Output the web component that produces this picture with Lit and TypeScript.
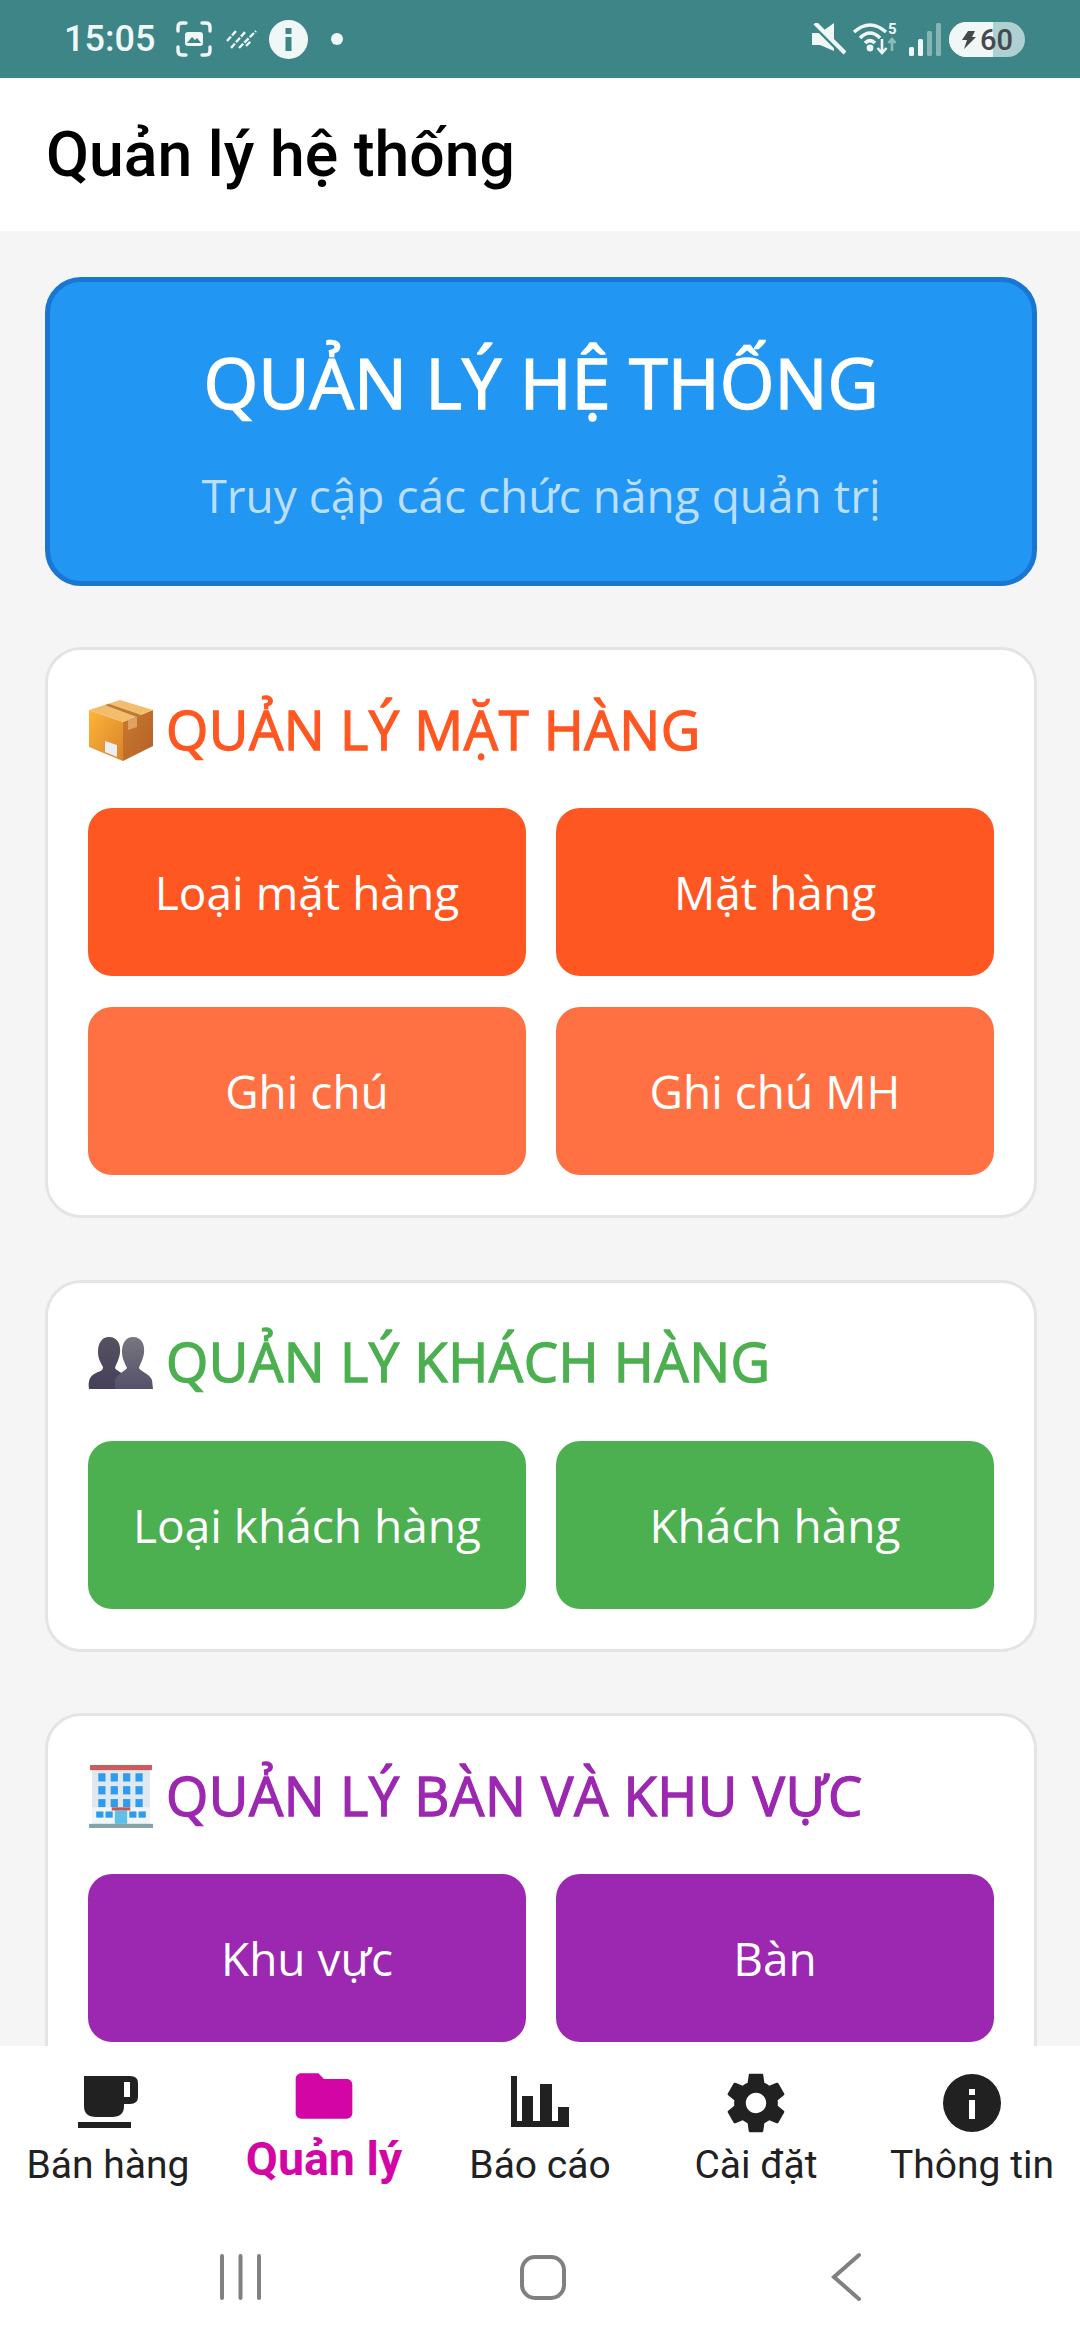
import { css, html, LitElement, svg, TemplateResult } from "lit";
import { customElement } from "lit/decorators.js";

const boxEmoji = html`<svg class="emoji" viewBox="0 0 66 64">
  <defs>
    <linearGradient id="boxL" x1="0" y1="0" x2="1" y2="1">
      <stop offset="0" stop-color="#ffb638" />
      <stop offset="1" stop-color="#d9822b" />
    </linearGradient>
    <linearGradient id="boxR" x1="0" y1="0" x2="1" y2="1">
      <stop offset="0" stop-color="#c97a2c" />
      <stop offset="1" stop-color="#b5602a" />
    </linearGradient>
  </defs>
  <path d="M1 11 L35 23 L35 62 L1 48 Z" fill="url(#boxL)" />
  <path d="M35 23 L65 11 L65 47 L35 62 Z" fill="url(#boxR)" />
  <path d="M1 11 L32 1 L65 11 L35 23 Z" fill="#f3bd6e" />
  <path d="M17 6 L21 5 L53 16 L49 18 Z" fill="#b97a3a" />
  <path d="M40 21 L49 18 L49 28 L40 31 Z" fill="#e0a060" />
  <path d="M17 42 L29 46 L29 58 L17 53 Z" fill="#eceef4" />
</svg>`;

const peopleEmoji = html`<svg class="emoji" viewBox="0 0 66 56">
  <defs>
    <linearGradient id="backP" x1="0" y1="0" x2="0" y2="1">
      <stop offset="0" stop-color="#55525f" />
      <stop offset="1" stop-color="#46405a" />
    </linearGradient>
    <linearGradient id="frontP" x1="0" y1="0" x2="0" y2="1">
      <stop offset="0" stop-color="#78767f" />
      <stop offset="1" stop-color="#55506a" />
    </linearGradient>
  </defs>
  <path
    d="M21 2 C30 2 33 10 32 18 C31 25 28 29 27 33 C29 37 38 38 40 46 L40 54 L1 54 C0 47 1 41 8 38 C12 36 15 36 15 32 C13 28 10 24 10 17 C10 8 14 2 21 2 Z"
    fill="url(#backP)"
  />
  <path
    d="M45 2 C54 2 57 10 56 18 C55 25 52 29 51 33 C53 37 61 38 64 45 L65 54 L27 54 L27 45 C30 38 36 37 39 33 C37 28 34 24 34 17 C34 8 38 2 45 2 Z"
    fill="url(#frontP)"
  />
</svg>`;

const hotelWindows = [0, 1, 2, 3].flatMap((c) =>
  [0, 1, 2].map(
    (r) =>
      svg`<rect x=${9 + c * 12} y=${8 + r * 12.5} width="7" height="8" fill="#2e9bef" />`
  )
);

const hotelEmoji = html`<svg class="emoji" viewBox="0 0 62 62">
  <rect x="3" y="4" width="56" height="54" fill="#dfe8ef" />
  <rect x="1" y="0" width="60" height="5" fill="#cf5a5c" />
  ${hotelWindows}
  <rect x="3" y="41" width="56" height="16" fill="#f1f5f8" />
  <rect x="7" y="45" width="7" height="6" fill="#2e9bef" />
  <rect x="16" y="45" width="7" height="6" fill="#2e9bef" />
  <rect x="39" y="45" width="7" height="6" fill="#2e9bef" />
  <rect x="48" y="45" width="7" height="6" fill="#2e9bef" />
  <rect x="25" y="44" width="12" height="13" fill="#5cc0e8" />
  <rect x="22" y="41" width="18" height="3" fill="#c9544f" />
  <rect x="0" y="57" width="62" height="4" fill="#84a3a8" />
</svg>`;

interface Section {
  emoji: TemplateResult;
  title: string;
  color: string;
  buttons: { label: string; color: string }[];
}

const sections: Section[] = [
  {
    emoji: boxEmoji,
    title: "QUẢN LÝ MẶT HÀNG",
    color: "#ff5722",
    buttons: [
      { label: "Loại mặt hàng", color: "#ff5722" },
      { label: "Mặt hàng", color: "#ff5722" },
      { label: "Ghi chú", color: "#ff7043" },
      { label: "Ghi chú MH", color: "#ff7043" },
    ],
  },
  {
    emoji: peopleEmoji,
    title: "QUẢN LÝ KHÁCH HÀNG",
    color: "#4caf50",
    buttons: [
      { label: "Loại khách hàng", color: "#4caf50" },
      { label: "Khách hàng", color: "#4caf50" },
    ],
  },
  {
    emoji: hotelEmoji,
    title: "QUẢN LÝ BÀN VÀ KHU VỰC",
    color: "#9c27b0",
    buttons: [
      { label: "Khu vực", color: "#9c27b0" },
      { label: "Bàn", color: "#9c27b0" },
    ],
  },
];

const tabs = [
  {
    label: "Bán hàng",
    icon: html`<svg class="tab-icon" viewBox="0 0 60 60" fill="currentColor">
      <path
        d="M6 3 H52 Q60 3 60 10 V24 Q60 31 52 31 H46 V33 Q46 44 34 44 H18 Q6 44 6 33 Z M46 9 V24 H52 V9 Z"
        fill-rule="evenodd"
      />
      <rect x="0" y="49" width="53" height="6" />
    </svg>`,
  },
  {
    label: "Quản lý",
    active: true,
    icon: html`<svg class="tab-icon folder" viewBox="0 0 24 24" fill="currentColor">
      <path
        d="M10 4H4c-1.1 0-1.99.9-1.99 2L2 18c0 1.1.9 2 2 2h16c1.1 0 2-.9 2-2V8c0-1.1-.9-2-2-2h-8l-2-2z"
      />
    </svg>`,
  },
  {
    label: "Báo cáo",
    icon: html`<svg class="tab-icon" viewBox="0 0 60 60" fill="currentColor">
      <path
        d="M1 3 H7 V48 H12 V23 H23 V48 H30 V11 H42 V48 H48 V34 H59 V54 H1 Z"
      />
    </svg>`,
  },
  {
    label: "Cài đặt",
    icon: html`<svg class="tab-icon large" viewBox="0 0 24 24" fill="currentColor">
      <path
        d="M19.43 12.98c.04-.32.07-.64.07-.98s-.03-.66-.07-.98l2.11-1.65c.19-.15.24-.42.12-.64l-2-3.46c-.12-.22-.39-.3-.61-.22l-2.49 1c-.52-.4-1.08-.73-1.69-.98l-.38-2.65C14.46 2.18 14.25 2 14 2h-4c-.25 0-.46.18-.49.42l-.38 2.65c-.61.25-1.17.59-1.69.98l-2.49-1c-.23-.09-.49 0-.61.22l-2 3.46c-.13.22-.07.49.12.64l2.11 1.65c-.04.32-.07.65-.07.98s.03.66.07.98l-2.11 1.65c-.19.15-.24.42-.12.64l2 3.46c.12.22.39.3.61.22l2.49-1c.52.4 1.08.73 1.69.98l.38 2.65c.03.24.24.42.49.42h4c.25 0 .46-.18.49-.42l.38-2.65c.61-.25 1.17-.59 1.69-.98l2.49 1c.23.09.49 0 .61-.22l2-3.46c.12-.22.07-.49-.12-.64l-2.11-1.65zM12 15.5c-1.93 0-3.5-1.57-3.5-3.5s1.57-3.5 3.5-3.5 3.5 1.57 3.5 3.5-1.57 3.5-3.5 3.5z"
      />
    </svg>`,
  },
  {
    label: "Thông tin",
    icon: html`<svg class="tab-icon" viewBox="0 0 60 60" fill="currentColor">
      <path
        fill-rule="evenodd"
        d="M30 1 A29 29 0 1 0 30 59 A29 29 0 1 0 30 1 Z M27 16 H33 V22 H27 Z M27 27 H33 V46 H27 Z"
      />
    </svg>`,
  },
];

@customElement("app-root")
export class AppRoot extends LitElement {
  static styles = css`
    :host {
      display: flex;
      flex-direction: column;
      width: 1080px;
      height: 2340px;
      overflow: hidden;
      background: #f5f5f5;
      font-family: "Open Sans", "Noto Sans", sans-serif;
    }

    .status {
      flex: none;
      height: 78px;
      padding: 0 55px 0 64px;
      background: #3d8587;
      color: #eff7f7;
      display: flex;
      align-items: center;
      box-sizing: border-box;
    }

    .time {
      font-family: Roboto, sans-serif;
      font-weight: 500;
      font-size: 36px;
      width: 112px;
    }

    .status-left {
      display: flex;
      align-items: center;
    }

    .status-right {
      margin-left: auto;
      display: flex;
      align-items: center;
    }

    .status svg {
      display: block;
    }

    .header {
      flex: none;
      height: 153px;
      padding-left: 46px;
      background: #fff;
      display: flex;
      align-items: center;
      box-sizing: border-box;
      font-family: Roboto, sans-serif;
      font-weight: 500;
      font-size: 62.5px;
      color: #000;
    }

    .content {
      flex: 1;
      min-height: 0;
      overflow: hidden;
      padding: 46px 43px 0 45px;
      display: flex;
      flex-direction: column;
      gap: 61.5px;
    }

    .hero {
      flex: none;
      height: 308.5px;
      box-sizing: border-box;
      border: 5px solid #1976d2;
      border-radius: 36px;
      background: #2196f3;
      display: flex;
      flex-direction: column;
      align-items: center;
      color: #fff;
      padding-top: 50px;
    }

    .hero-title {
      font-size: 70.4px;
      line-height: 100px;
      -webkit-text-stroke: 1.5px #fff;
    }

    .hero-sub {
      font-size: 46px;
      line-height: 64px;
      margin-top: 31px;
      color: #bbdefb;
    }

    .card {
      flex: none;
      box-sizing: border-box;
      background: #fff;
      border: 3px solid #e4e4e4;
      border-radius: 36px;
      padding: 40px;
    }

    .card-title {
      display: flex;
      align-items: center;
      gap: 12px;
      height: 81px;
      margin-bottom: 37px;
      font-size: 54.4px;
      white-space: nowrap;
    }

    .card-title span {
      padding-bottom: 4px;
      -webkit-text-stroke: 1.3px currentColor;
      letter-spacing: 0.5px;
    }

    .emoji {
      width: 66px;
      height: 64px;
      flex: none;
    }

    .buttons {
      display: grid;
      grid-template-columns: 1fr 1fr;
      gap: 31px 30px;
    }

    .btn {
      height: 168px;
      border-radius: 24px;
      display: flex;
      align-items: center;
      justify-content: center;
      color: #fff;
      font-size: 46px;
    }

    .nav {
      flex: none;
      height: 294px;
      box-sizing: border-box;
      background: #fff;
      display: flex;
      flex-direction: column;
      color: #212121;
      font-family: Roboto, sans-serif;
    }

    .tabs {
      display: grid;
      grid-template-columns: repeat(5, 1fr);
      padding-top: 27px;
    }

    .tab {
      display: flex;
      flex-direction: column;
      align-items: center;
      gap: 7px;
      font-size: 39px;
      line-height: 50px;
      white-space: nowrap;
    }

    .tab.active {
      color: #d305a5;
      font-weight: 700;
      font-size: 46.5px;
    }

    .tab-icon {
      width: 60px;
      height: 60px;
      display: block;
      flex: none;
    }

    .tab-icon.folder {
      width: 68px;
      height: 68px;
      margin: -11px 0 -3px;
    }

    .tab-icon.large {
      width: 70px;
      height: 70px;
      margin: -5px 0;
    }

    .gestures {
      display: flex;
      justify-content: center;
      margin-top: auto;
      padding-bottom: 38px;
    }

    .gestures svg {
      display: block;
      width: 306px;
      height: 50px;
      color: #808080;
    }
  `;

  private renderSection(s: Section) {
    return html`<section class="card">
      <div class="card-title" style="color: ${s.color}">
        ${s.emoji}<span>${s.title}</span>
      </div>
      <div class="buttons">
        ${s.buttons.map(
          (b) =>
            html`<div class="btn" style="background: ${b.color}">
              ${b.label}
            </div>`
        )}
      </div>
    </section>`;
  }

  render() {
    return html`
      <div class="status">
        <div class="status-left">
          <span class="time">15:05</span>
          <svg width="36" height="36" viewBox="0 0 36 36" fill="none" stroke="currentColor" stroke-width="3.4" stroke-linecap="round">
            <path d="M2 10 V6 Q2 2 6 2 H10 M26 2 H30 Q34 2 34 6 V10 M34 26 V30 Q34 34 30 34 H26 M10 34 H6 Q2 34 2 30 V26" />
            <rect x="9" y="11" width="18" height="14" rx="3" fill="currentColor" stroke="none" />
            <path d="M11 22 L16 16 L19 19 L21 17 L25 22 Z" fill="#3d8587" stroke="none" />
          </svg>
          <svg style="margin-left: 14px" width="32" height="20" viewBox="0 0 32 20" fill="none" stroke="currentColor" stroke-width="2.4" stroke-dasharray="6 1.6">
            <path d="M1 12 L10 2 M5 19 L20 2 M13 19 L30 2 M20 17 L25 12" />
          </svg>
          <svg style="margin-left: 11px" width="39" height="39" viewBox="0 0 39 39">
            <path fill="currentColor" fill-rule="evenodd" d="M19.5 0 A19.5 19.5 0 1 0 19.5 39 A19.5 19.5 0 1 0 19.5 0 Z M16.5 8 H22.5 V14 H16.5 Z M16.5 17 H22.5 V31 H16.5 Z" />
          </svg>
          <svg style="margin-left: 23px" width="12" height="12" viewBox="0 0 12 12">
            <circle cx="6" cy="6" r="6" fill="currentColor" />
          </svg>
        </div>
        <div class="status-right">
          <svg width="34" height="32" viewBox="0 0 34 32" fill="currentColor">
            <path d="M0 10 H8 L22 0 V28 L8 22 H0 Z" />
            <path d="M2 1 L31 30" stroke="#3d8587" stroke-width="6" />
            <path d="M3 0 L33 30" stroke="currentColor" stroke-width="4.2" />
          </svg>
          <svg style="margin-left: 6px" width="46" height="36" viewBox="0 0 46 36" fill="none">
            <path d="M2 11 Q18 -3 34 11 M8 17 Q18 7 28 17 M13 22 Q18 17 23 22" stroke="currentColor" stroke-width="3.6" />
            <circle cx="18" cy="27" r="3.4" fill="currentColor" />
            <path d="M30 18 V32 M25.5 27 L30 32 L34.5 27" stroke="currentColor" stroke-width="2.6" />
            <path d="M40 18 V30 M36.5 22 L40 18 L43.5 22" stroke="#8dbcbc" stroke-width="2.6" />
            <text x="36" y="13" font-family="Roboto" font-weight="700" font-size="15" fill="currentColor">5</text>
          </svg>
          <svg style="margin-left: 11px" width="32" height="33" viewBox="0 0 32 33">
            <rect x="0" y="24" width="5" height="9" rx="1.5" fill="#eff7f7" />
            <rect x="9" y="16" width="5" height="17" rx="1.5" fill="#eff7f7" />
            <rect x="18" y="8" width="5" height="25" rx="1.5" fill="#86b5b6" />
            <rect x="27" y="0" width="5" height="33" rx="1.5" fill="#86b5b6" />
          </svg>
          <svg style="margin-left: 8px" width="76" height="35" viewBox="0 0 76 35">
            <rect x="0" y="0" width="76" height="35" rx="17.5" fill="#aed0d0" />
            <path d="M17.5 0 H44 V35 H17.5 A17.5 17.5 0 0 1 17.5 0 Z" fill="#f1f7f7" />
            <path d="M19 9 H26 L23 15 H27 L15 27 L18 18 H13 Z" fill="#45494c" />
            <text x="31" y="28" font-family="Roboto" font-weight="500" font-size="29" fill="#45494c">60</text>
          </svg>
        </div>
      </div>
      <div class="header">Quản lý hệ thống</div>
      <div class="content">
        <div class="hero">
          <div class="hero-title">QUẢN LÝ HỆ THỐNG</div>
          <div class="hero-sub">Truy cập các chức năng quản trị</div>
        </div>
        ${sections.map((s) => this.renderSection(s))}
      </div>
      <nav class="nav">
        <div class="tabs">
          ${tabs.map(
            (t) =>
              html`<div class="tab ${t.active ? "active" : ""}">
                ${t.icon}<span>${t.label}</span>
              </div>`
          )}
        </div>
        <div class="gestures">
          <svg viewBox="0 0 306 50" fill="none" stroke="currentColor" stroke-width="4" stroke-linecap="round"><path d="M141 4 V46 M159.5 4 V46 M178 4 V46" /></svg>
          <svg viewBox="0 0 306 50" fill="none" stroke="currentColor" stroke-width="4" stroke-linecap="round"><rect x="135" y="5" width="42" height="41" rx="13" /></svg>
          <svg viewBox="0 0 306 50" fill="none" stroke="currentColor" stroke-width="4" stroke-linecap="round"><path d="M166 3 L141 25 L166 47" /></svg>
        </div>
      </nav>
    `;
  }
}
